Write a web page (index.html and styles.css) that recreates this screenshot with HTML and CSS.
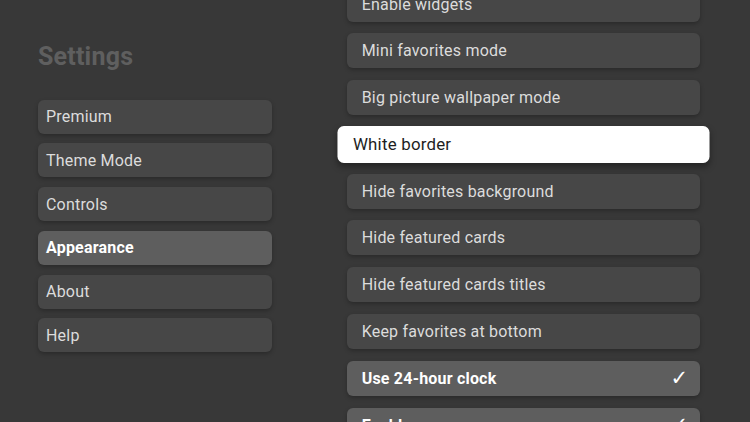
FILE: index.html
```html
<!DOCTYPE html>
<html>
<head>
<meta charset="utf-8">
<link rel="stylesheet" href="styles.css">
</head>
<body>
<div class="screen">
  <aside class="side">
    <h1 class="title">Settings</h1>
    <nav class="menu">
      <div class="menu-item">Premium</div>
      <div class="menu-item">Theme Mode</div>
      <div class="menu-item">Controls</div>
      <div class="menu-item active">Appearance</div>
      <div class="menu-item">About</div>
      <div class="menu-item">Help</div>
    </nav>
  </aside>
  <main class="options">
    <div class="opt">Enable widgets</div>
    <div class="opt">Mini favorites mode</div>
    <div class="opt">Big picture wallpaper mode</div>
    <div class="opt focused">White border</div>
    <div class="opt">Hide favorites background</div>
    <div class="opt">Hide featured cards</div>
    <div class="opt">Hide featured cards titles</div>
    <div class="opt">Keep favorites at bottom</div>
    <div class="opt checked"><span>Use 24-hour clock</span><span class="check">✓</span></div>
    <div class="opt checked"><span>Enable screensaver</span><span class="check">✓</span></div>
  </main>
</div>
</body>
</html>
```
FILE: styles.css
```css
html, body {
  margin: 0;
  padding: 0;
  background: #383838;
}
body {
  width: 750px;
  height: 422px;
  overflow: hidden;
  font-family: Roboto, "Noto Sans", sans-serif;
}
.screen {
  display: flex;
  height: 422px;
  overflow: hidden;
}
.side {
  width: 234px;
  margin-left: 38px;
  padding-top: 42px;
}
.title {
  margin: 0;
  font-size: 25px;
  font-weight: 700;
  line-height: 29px;
  color: #5f5f5f;
  letter-spacing: 0.2px;
}
.menu {
  margin-top: 28.5px;
  display: flex;
  flex-direction: column;
  gap: 9.8px;
}
.menu-item {
  height: 34px;
  display: flex;
  align-items: center;
  padding-left: 8px;
  border-radius: 6px;
  background: #474747;
  color: #dcdcdc;
  font-size: 16px;
  letter-spacing: 0.2px;
  box-shadow: 0 2px 4px rgba(0,0,0,0.25);
}
.menu-item.active {
  background: #5e5e5e;
  color: #ffffff;
  font-weight: 700;
}
.options {
  width: 353px;
  margin-left: 75px;
  margin-top: -13.5px;
  display: flex;
  flex-direction: column;
  gap: 11.8px;
}
.opt {
  flex: none;
  height: 35px;
  display: flex;
  align-items: center;
  justify-content: space-between;
  padding: 0 12px 0 14.7px;
  border-radius: 6px;
  background: #474747;
  color: #dcdcdc;
  font-size: 16px;
  letter-spacing: 0.2px;
  box-shadow: 0 2px 4px rgba(0,0,0,0.25);
}
.opt.focused {
  background: #ffffff;
  color: #1e1e1e;
  transform: scale(1.054);
  box-shadow: 0 3px 6px rgba(0,0,0,0.35);
}
.opt.checked {
  background: #5e5e5e;
  color: #ffffff;
  font-weight: 700;
}
.check {
  font-family: "DejaVu Sans", sans-serif;
  font-weight: 700;
  font-size: 21px;
  letter-spacing: 0;
}
```
